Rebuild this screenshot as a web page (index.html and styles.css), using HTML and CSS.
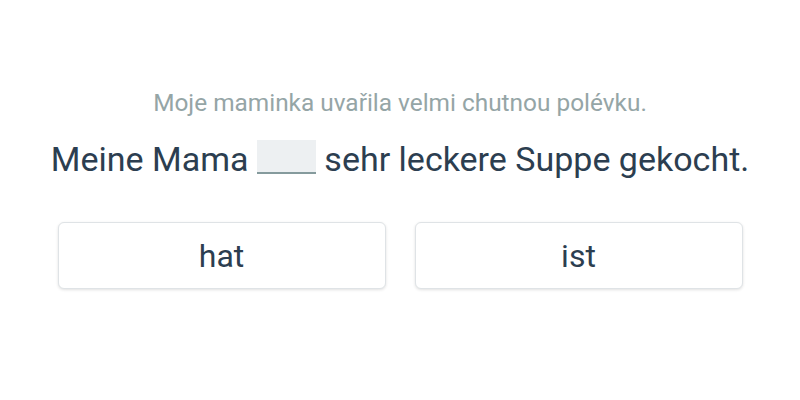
FILE: index.html
```html
<!DOCTYPE html>
<html>
<head>
<meta charset="utf-8">
<link rel="stylesheet" href="styles.css">
</head>
<body>
<main class="exercise">
  <p class="hint">Moje maminka uvařila velmi chutnou polévku.</p>
  <p class="sentence">Meine Mama <span class="blank"></span> sehr leckere Suppe gekocht.</p>
  <div class="options">
    <button class="option">hat</button>
    <button class="option">ist</button>
  </div>
</main>
</body>
</html>
```
FILE: styles.css
```css
html, body {
  margin: 0;
  padding: 0;
  background: #ffffff;
}
body {
  font-family: Roboto, "Noto Sans", sans-serif;
  width: 800px;
  height: 400px;
}
.exercise {
  display: flex;
  flex-direction: column;
  align-items: center;
  padding-top: 87px;
}
.hint {
  margin: 0;
  font-size: 24.4px;
  line-height: 32px;
  color: #95a5a6;
}
.sentence {
  margin: 20px 0 0;
  font-size: 34px;
  line-height: 40px;
  color: #2c3e50;
}
.blank {
  display: inline-block;
  width: 59px;
  height: 32px;
  background: #edf0f2;
  border-bottom: 2px solid #859b9d;
  vertical-align: -3px;
}
.options {
  display: flex;
  gap: 29px;
  margin-top: 43px;
}
.option {
  width: 328px;
  height: 67px;
  background: #fff;
  border: 1px solid #dfe3e6;
  border-radius: 6px;
  box-shadow: 0 1px 3px rgba(0,0,0,0.12);
  font-family: Roboto, "Noto Sans", sans-serif;
  font-size: 32px;
  color: #2c3e50;
  padding: 0;
}
```
